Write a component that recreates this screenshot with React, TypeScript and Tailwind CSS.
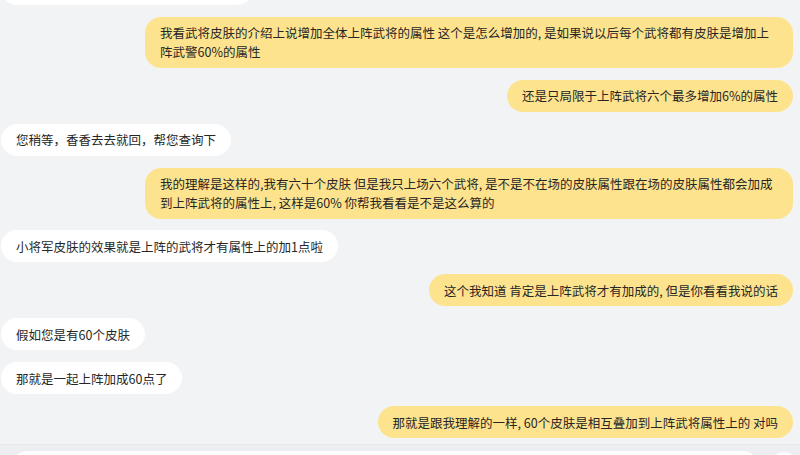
import React from 'react';

type Msg = { side: 'me' | 'them'; lines: string[] };

const messages: Msg[] = [
  {
    side: 'me',
    lines: [
      '我看武将皮肤的介绍上说增加全体上阵武将的属性 这个是怎么增加的, 是如果说以后每个武将都有皮肤是增加上',
      '阵武警60%的属性',
    ],
  },
  { side: 'me', lines: ['还是只局限于上阵武将六个最多增加6%的属性'] },
  { side: 'them', lines: ['您稍等，香香去去就回，帮您查询下'] },
  {
    side: 'me',
    lines: [
      '我的理解是这样的,我有六十个皮肤 但是我只上场六个武将, 是不是不在场的皮肤属性跟在场的皮肤属性都会加成',
      '到上阵武将的属性上, 这样是60% 你帮我看看是不是这么算的',
    ],
  },
  { side: 'them', lines: ['小将军皮肤的效果就是上阵的武将才有属性上的加1点啦'] },
  { side: 'me', lines: ['这个我知道 肯定是上阵武将才有加成的, 但是你看看我说的话'] },
  { side: 'them', lines: ['假如您是有60个皮肤'] },
  { side: 'them', lines: ['那就是一起上阵加成60点了'] },
  { side: 'me', lines: ['那就是跟我理解的一样, 60个皮肤是相互叠加到上阵武将属性上的 对吗'] },
];

const Bubble: React.FC<{ msg: Msg }> = ({ msg }) => {
  const mine = msg.side === 'me';
  // wrapped messages fill the max bubble width
  const wrapped = msg.lines.length > 1;
  return (
    <div className={`flex ${mine ? 'justify-end pr-[7px]' : 'justify-start pl-[1px]'}`}>
      <div
        className={`rounded-2xl px-[15px] py-[6.5px] text-[12.5px] leading-[19px] text-[#262626] whitespace-nowrap ${
          wrapped ? 'w-[648px]' : ''
        } ${mine ? 'bg-[#fee38e]' : 'bg-white'}`}
      >
        {msg.lines.map((l, i) => (
          <div key={i}>{l}</div>
        ))}
      </div>
    </div>
  );
};

export default function App() {
  return (
    <div
      className="w-[800px] h-[455px] overflow-hidden bg-[#f2f3f5] flex flex-col"
      style={{ fontFamily: '"Noto Sans CJK SC", "Noto Sans", sans-serif' }}
    >
      <div className="h-[444px] shrink-0 overflow-hidden flex flex-col gap-[11.9px]">
        {/* previous message, mostly scrolled out */}
        <div className="pl-[1px] -mt-[27px]">
          <div className="w-[252px] h-[32px] rounded-2xl bg-white" />
        </div>
        {messages.map((m, i) => (
          <Bubble key={i} msg={m} />
        ))}
      </div>

      {/* input bar */}
      <div className="shrink-0 bg-[#eceef1] border-t border-[#e6e7ea] flex items-start gap-[10px] pl-[10px] pr-[2px] pt-[6px]">
        <div className="flex-1 h-[36px] rounded-full bg-white" />
        <div className="w-[28px] h-[28px] rounded-full bg-white mt-[1px]" />
      </div>
    </div>
  );
}
